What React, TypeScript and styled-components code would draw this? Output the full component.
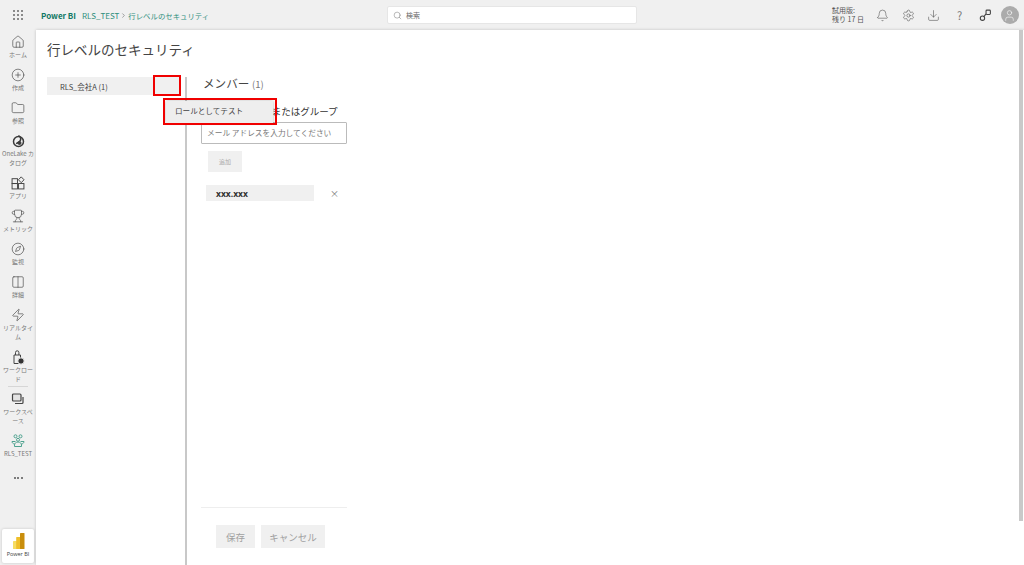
import { ReactNode } from "react";
import styled, { createGlobalStyle } from "styled-components";
import { Bell, ChevronRight, CirclePlus, Compass, Columns2, Download, Folder, House, Search, Settings, Trophy, User, Zap } from "lucide-react";

const GlobalStyle = createGlobalStyle`
  html, body {
    margin: 0;
    height: 100%;
    overflow: hidden;
    background: #f0f0f0;
    font-family: "Noto Sans CJK JP", "Open Sans", sans-serif;
    color: #333;
  }
`;

const Page = styled.div`
  width: 1024px;
  height: 565px;
  display: flex;
  flex-direction: column;
  background: #f0f0f0;
`;

const Header = styled.header`
  height: 30px;
  flex: none;
  display: grid;
  grid-template-columns: 387px 250px 1fr;
  align-items: center;
`;

const HeaderLeft = styled.div`
  display: flex;
  align-items: center;
  padding-left: 13px;
`;

const Waffle = styled.div`
  width: 11px;
  display: grid;
  grid-template-columns: repeat(3, 2px);
  gap: 2px;
  margin-right: 17px;
  span {
    width: 2px;
    height: 2px;
    background: #8a8a8a;
  }
`;

const Brand = styled.span`
  font-size: 8px;
  font-weight: 700;
  color: #117865;
  margin-right: 6px;
`;

const Crumb = styled.span`
  font-size: 7.4px;
  color: #2f8f7d;
  display: flex;
  align-items: center;
  gap: 1px;
`;

const CrumbRoot = styled.span`
  font-size: 8px;
`;

const SearchBox = styled.div`
  height: 18px;
  background: #fff;
  border: 1px solid #e6e6e6;
  border-radius: 2px;
  box-sizing: border-box;
  display: flex;
  align-items: center;
  gap: 4px;
  padding-left: 5px;
  font-size: 7px;
  color: #666;
`;

const HeaderRight = styled.div`
  display: flex;
  align-items: center;
  padding-left: 195px;
`;

const Trial = styled.div`
  width: 38px;
  font-size: 7px;
  line-height: 9px;
  color: #555;
`;

const HeaderIcon = styled.div`
  width: 25.6px;
  display: flex;
  justify-content: center;
  color: #444;
  font-size: 11px;
  line-height: 12px;
`;

const HelpMark = styled(HeaderIcon)`
  color: #777;
`;

const Avatar = styled.div`
  width: 18px;
  height: 18px;
  border-radius: 50%;
  background: #ababab;
  color: #fff;
  display: flex;
  align-items: center;
  justify-content: center;
  margin-left: 3px;
`;

const Body = styled.div`
  flex: 1;
  min-height: 0;
  display: flex;
`;

const Rail = styled.nav`
  width: 36px;
  flex: none;
  display: flex;
  flex-direction: column;
  align-items: center;
  padding-top: 4px;
  box-sizing: border-box;
`;

const NavItem = styled.div<{ $tail?: number }>`
  width: 34px;
  display: flex;
  flex-direction: column;
  align-items: center;
  margin-bottom: ${(p) => p.$tail ?? 8}px;
`;

const NavIcon = styled.div`
  height: 16px;
  display: flex;
  align-items: center;
  justify-content: center;
  color: #444;
`;

const NavLabel = styled.div`
  font-size: 6px;
  line-height: 9px;
  text-align: center;
  color: #777;
  word-break: break-all;
`;

const RailRule = styled.div`
  width: 20px;
  height: 1px;
  background: #d6d6d6;
  margin-bottom: 4px;
`;

const More = styled.div`
  height: 16px;
  margin-top: 12px;
  display: flex;
  align-items: center;
  gap: 1.5px;
  span {
    width: 2px;
    height: 2px;
    border-radius: 50%;
    background: #555;
  }
`;

const Switcher = styled.div`
  margin-top: auto;
  margin-bottom: 2px;
  width: 32px;
  height: 34px;
  background: #fff;
  border-radius: 2px;
  box-shadow: 0 0 3px rgba(0, 0, 0, 0.18);
  display: flex;
  flex-direction: column;
  align-items: center;
  padding-top: 4px;
  box-sizing: border-box;
  font-size: 5.5px;
  line-height: 10px;
  color: #444;
  font-family: "Open Sans", sans-serif;
`;

const Main = styled.main`
  flex: 1;
  min-width: 0;
  background: #fff;
  box-shadow: 0 0 3px rgba(0, 0, 0, 0.2);
  display: flex;
  flex-direction: column;
  padding-left: 11px;
  position: relative;
`;

const Scrollbar = styled.div`
  position: absolute;
  top: 0;
  right: 1px;
  width: 4px;
  height: 491px;
  background: #c9c9c9;
`;

const Title = styled.h1`
  margin: 0;
  height: 47px;
  padding-top: 9px;
  box-sizing: border-box;
  font-size: 13.5px;
  line-height: 20px;
  font-weight: 400;
  color: #444;
`;

const Columns = styled.div`
  flex: 1;
  min-height: 0;
  display: flex;
`;

const RolesPane = styled.div`
  width: 138px;
  flex: none;
  position: relative;
`;

const RoleRow = styled.div`
  height: 18px;
  margin-right: 6px;
  background: #f0f0f0;
  display: flex;
  align-items: center;
  padding-left: 13px;
  font-size: 7.5px;
  color: #444;
`;

const RedFrame = styled.div<{ $x: number; $y: number; $w: number; $h: number }>`
  position: absolute;
  left: ${(p) => p.$x}px;
  top: ${(p) => p.$y}px;
  width: ${(p) => p.$w}px;
  height: ${(p) => p.$h}px;
  border: 2px solid #f00000;
  box-sizing: border-box;
  z-index: 3;
`;

const Popup = styled.div`
  position: absolute;
  left: 119px;
  top: 24px;
  width: 107px;
  height: 22px;
  background: #eeeeee;
  box-shadow: 0 0 3px rgba(0, 0, 0, 0.3);
  display: flex;
  align-items: center;
  padding: 0 0 3px 9px;
  box-sizing: border-box;
  font-size: 7.6px;
  color: #444;
  z-index: 2;
`;

const MembersPane = styled.section`
  flex: none;
  width: 146px;
  border-left: 2px solid #c8c8c8;
  padding: 0 0 17px 14px;
  display: flex;
  flex-direction: column;
`;

const MembersTitle = styled.h2`
  margin: 0 0 0 2px;
  height: 12px;
  font-size: 11.6px;
  line-height: 12px;
  font-weight: 400;
  color: #444;
  span {
    font-size: 9.5px;
    color: #777;
  }
`;

const FieldLabel = styled.div`
  margin: 15px 0 0 2px;
  height: 14px;
  font-size: 9.5px;
  line-height: 14px;
  color: #333;
  white-space: nowrap;
`;

const MailInput = styled.div`
  height: 22px;
  width: 146px;
  margin-top: 4px;
  border: 1px solid #bbb;
  border-radius: 1px;
  box-sizing: border-box;
  display: flex;
  align-items: center;
  padding: 0 0 2px 5px;
  font-size: 7.7px;
  color: #777;
`;

const AddButton = styled.div`
  width: 34px;
  height: 21px;
  margin: 7px 0 0 7px;
  background: #f0f0f0;
  display: flex;
  align-items: center;
  justify-content: center;
  font-size: 6px;
  color: #aaa;
`;

const MemberRow = styled.div`
  margin: 13px 0 0 5px;
  display: flex;
  align-items: center;
`;

const Chip = styled.div`
  width: 108px;
  height: 16px;
  background: #f0f0f0;
  display: flex;
  align-items: center;
  padding-left: 10px;
  box-sizing: border-box;
  font-family: "Open Sans", sans-serif;
  font-size: 8.5px;
  font-weight: 700;
  color: #333;
`;

const Remove = styled.span`
  margin-left: 16px;
  font-size: 9px;
  color: #777;
`;

const Footer = styled.div`
  margin-top: auto;
  border-top: 1px solid #eeeeee;
  padding: 17px 0 0 15px;
  display: flex;
  gap: 6px;
`;

const FooterButton = styled.div<{ $w: number }>`
  width: ${(p) => p.$w}px;
  height: 23px;
  background: #f0f0f0;
  display: flex;
  align-items: center;
  justify-content: center;
  font-size: 9.5px;
  color: #a0a0a0;
`;

function WorkloadIcon() {
  return (
    <svg width="14" height="15" viewBox="0 0 14 15" fill="none" stroke="#444">
      <path d="M3 5h6.5v8.5H3z" />
      <path d="M4.500 5V2.500a1.700 1.700 0 0 1 3.400 0V5" />
      <circle cx="10" cy="11" r="3.200" fill="#333" stroke="#f0f0f0" />
    </svg>
  );
}

function WorkspaceIcon() {
  return (
    <svg width="14" height="14" viewBox="0 0 14 14" fill="none" stroke="#444" strokeWidth="1.200">
      <rect x="1.500" y="2" width="8.500" height="7" rx="1" fill="#e3e3e3" />
      <path d="M12 5v5.500a1 1 0 0 1-1 1H4" />
    </svg>
  );
}

function LakeIcon() {
  return (
    <svg width="13" height="14" viewBox="0 0 13 14" fill="none" stroke="#3a3a3a">
      <circle cx="6.500" cy="7.500" r="5" strokeWidth="1.500" />
      <path d="M6.500 1.500c2 1.500 3 3.500 1.500 5.500s-3 1-3.500 3" strokeWidth="1.500" />
      <circle cx="7.500" cy="9" r="1.500" fill="#3a3a3a" />
    </svg>
  );
}

function AppsIcon() {
  return (
    <svg width="14" height="14" viewBox="0 0 13 13" fill="none" stroke="#444" strokeWidth="0.900">
      <rect x="1" y="2.500" width="5" height="4.500" />
      <rect x="1" y="7" width="5" height="5" />
      <rect x="7" y="7" width="5" height="5" />
      <path d="M9.500 0.800l2.600 2.700-2.600 2.700-2.600-2.700z" />
    </svg>
  );
}

function MemberGroupIcon() {
  return (
    <svg width="14" height="14" viewBox="0 0 14 14" fill="none" stroke="#4fa390">
      <circle cx="4.500" cy="2.300" r="1.500" />
      <circle cx="9.500" cy="2.300" r="1.500" />
      <circle cx="7" cy="5.800" r="1.500" />
      <path d="M1 7.500h3.500M9.500 7.500H13" />
      <path d="M1 7.500c0 1.300 1 2.300 2.500 2.500M13 7.500c0 1.300-1 2.300-2.500 2.500" />
      <path d="M3.500 12.500h7v-1.500c0-1.700-1.500-3-3.500-3s-3.500 1.300-3.500 3z" />
    </svg>
  );
}

function PowerBiLogo() {
  return (
    <svg width="13" height="16" viewBox="0 0 13 16">
      <rect x="1" y="8" width="4" height="8" rx="0.600" fill="#f6dc62" />
      <rect x="4.200" y="4" width="4.500" height="12" rx="0.600" fill="#efbf2a" />
      <rect x="8" y="0" width="4.500" height="16" rx="0.600" fill="#c98e0c" />
    </svg>
  );
}

function ShareIcon() {
  return (
    <svg width="13" height="13" viewBox="0 0 12 12" fill="none" stroke="#444">
      <rect x="6.500" y="1" width="4" height="4" rx="0.800" />
      <circle cx="3.200" cy="8.500" r="2" />
      <path d="M6.500 4.500 4.500 7" />
    </svg>
  );
}

type NavEntry = { label: string; icon: ReactNode; tail?: number };

const topNav: NavEntry[] = [
  { label: "ホーム", icon: <House size={14} strokeWidth={1.1} /> },
  { label: "作成", icon: <CirclePlus size={14} strokeWidth={1.1} /> },
  { label: "参照", icon: <Folder size={14} strokeWidth={1.1} /> },
  { label: "OneLake カタログ", icon: <LakeIcon /> },
  { label: "アプリ", icon: <AppsIcon /> },
  { label: "メトリック", icon: <Trophy size={14} strokeWidth={1.1} /> },
  { label: "監視", icon: <Compass size={14} strokeWidth={1.1} /> },
  { label: "詳細", icon: <Columns2 size={14} strokeWidth={1.1} /> },
  { label: "リアルタイム", icon: <Zap size={14} strokeWidth={1.1} /> },
  { label: "ワークロード", icon: <WorkloadIcon />, tail: 3 },
];

const bottomNav: NavEntry[] = [
  { label: "ワークスペース", icon: <WorkspaceIcon /> },
  { label: "RLS_TEST", icon: <MemberGroupIcon />, tail: 0 },
];

function NavEntries({ items }: { items: NavEntry[] }) {
  return (
    <>
      {items.map((item) => (
        <NavItem key={item.label} $tail={item.tail}>
          <NavIcon>{item.icon}</NavIcon>
          <NavLabel>{item.label}</NavLabel>
        </NavItem>
      ))}
    </>
  );
}

export default function App() {
  return (
    <Page>
      <GlobalStyle />
      <Header>
        <HeaderLeft>
          <Waffle>
            {Array.from({ length: 9 }).map((_, i) => (
              <span key={i} />
            ))}
          </Waffle>
          <Brand>Power BI</Brand>
          <Crumb>
            <CrumbRoot>RLS_TEST</CrumbRoot>
            <ChevronRight size={7} color="#666" />
            行レベルのセキュリティ
          </Crumb>
        </HeaderLeft>
        <SearchBox>
          <Search size={9} strokeWidth={1.2} color="#666" />
          検索
        </SearchBox>
        <HeaderRight>
          <Trial>
            試用版:
            <br />
            残り 17 日
          </Trial>
          <HeaderIcon>
            <Bell size={13} strokeWidth={1} />
          </HeaderIcon>
          <HeaderIcon>
            <Settings size={13} strokeWidth={1} />
          </HeaderIcon>
          <HeaderIcon>
            <Download size={13} strokeWidth={1} />
          </HeaderIcon>
          <HelpMark>?</HelpMark>
          <HeaderIcon>
            <ShareIcon />
          </HeaderIcon>
          <Avatar>
            <User size={13} strokeWidth={1.1} />
          </Avatar>
        </HeaderRight>
      </Header>
      <Body>
        <Rail>
          <NavEntries items={topNav} />
          <RailRule />
          <NavEntries items={bottomNav} />
          <More>
            <span />
            <span />
            <span />
          </More>
          <Switcher>
            <PowerBiLogo />
            Power BI
          </Switcher>
        </Rail>
        <Main>
          <Title>行レベルのセキュリティ</Title>
          <Columns>
            <RolesPane>
              <RoleRow>RLS_会社A (1)</RoleRow>
              <RedFrame $x={106} $y={-2} $w={28} $h={21} />
              <Popup>ロールとしてテスト</Popup>
              <RedFrame $x={116} $y={21} $w={114} $h={27} />
            </RolesPane>
            <MembersPane>
              <MembersTitle>
                メンバー <span>(1)</span>
              </MembersTitle>
              <FieldLabel>メール アドレスまたはグループ</FieldLabel>
              <MailInput>メール アドレスを入力してください</MailInput>
              <AddButton>追加</AddButton>
              <MemberRow>
                <Chip>xxx.xxx</Chip>
                <Remove>×</Remove>
              </MemberRow>
              <Footer>
                <FooterButton $w={39}>保存</FooterButton>
                <FooterButton $w={64}>キャンセル</FooterButton>
              </Footer>
            </MembersPane>
          </Columns>
          <Scrollbar />
        </Main>
      </Body>
    </Page>
  );
}
